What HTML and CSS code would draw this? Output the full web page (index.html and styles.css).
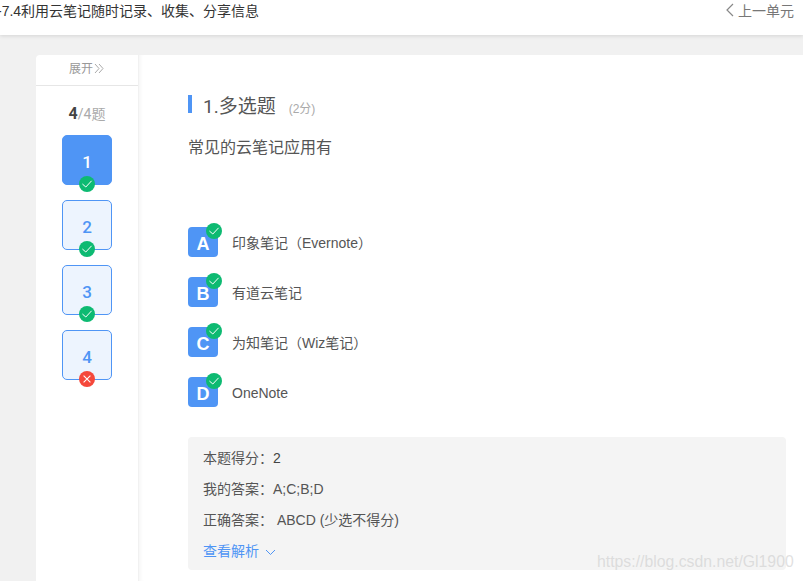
FILE: index.html
```html
<!DOCTYPE html>
<html>
<head>
    <title>7.4利用云笔记随时记录、收集、分享信息</title>
    <link rel="stylesheet" href="styles.css">
</head>
<body>
    <svg class="icon-defs" width="0" height="0">
        <symbol id="ok" viewBox="0 0 16 16">
            <circle cx="8" cy="8" r="8" fill="#0dba72"/>
            <path d="M3.4 8 L6.8 11 L12.6 4.8" fill="none" stroke="#fff" stroke-width="1"/>
        </symbol>
        <symbol id="wrong" viewBox="0 0 16 16">
            <circle cx="8" cy="8" r="8" fill="#f5483b"/>
            <path d="M4.6 4.6 L11.4 11.4 M11.4 4.6 L4.6 11.4" fill="none" stroke="#fff" stroke-width="1.1"/>
        </symbol>
    </svg>

    <header class="topbar">
        <div class="unit-title">-7.4利用云笔记随时记录、收集、分享信息</div>
        <a class="prev-unit">
            <svg width="9" height="14" viewBox="0 0 9 14"><path d="M8 1 L2 7 L8 13" fill="none" stroke="#888" stroke-width="1.2"/></svg>
            上一单元
        </a>
    </header>

    <div class="content">
        <aside class="sidebar">
            <div class="expand">展开<svg width="10" height="11" viewBox="0 0 10 11"><path d="M1 1 L5 5.5 L1 10 M5 1 L9 5.5 L5 10" fill="none" stroke="#aaa" stroke-width="1"/></svg></div>
            <div class="count"><b>4</b>/4题</div>
            <div class="numbers">
                <div class="num current">1<svg class="badge"><use href="#ok"/></svg></div>
                <div class="num">2<svg class="badge"><use href="#ok"/></svg></div>
                <div class="num">3<svg class="badge"><use href="#ok"/></svg></div>
                <div class="num">4<svg class="badge"><use href="#wrong"/></svg></div>
            </div>
        </aside>

        <main class="question">
            <div class="q-head">
                <span class="q-title">1.多选题</span>
                <span class="q-score">(2分)</span>
            </div>
            <p class="q-text">常见的云笔记应用有</p>

            <div class="options">
                <div class="option">
                    <div class="letter">A<svg class="tick"><use href="#ok"/></svg></div>
                    <span>印象笔记（Evernote）</span>
                </div>
                <div class="option">
                    <div class="letter">B<svg class="tick"><use href="#ok"/></svg></div>
                    <span>有道云笔记</span>
                </div>
                <div class="option">
                    <div class="letter">C<svg class="tick"><use href="#ok"/></svg></div>
                    <span>为知笔记（Wiz笔记）</span>
                </div>
                <div class="option">
                    <div class="letter">D<svg class="tick"><use href="#ok"/></svg></div>
                    <span class="latin">OneNote</span>
                </div>
            </div>

            <div class="result">
                <div class="result-row">本题得分：<span class="got">2</span></div>
                <div class="result-row">我的答案：A;C;B;D</div>
                <div class="result-row">正确答案：&nbsp;ABCD (少选不得分)</div>
                <div class="result-row analysis">查看解析
                    <svg width="11" height="7" viewBox="0 0 11 7"><path d="M1 1 L5.5 5.5 L10 1" fill="none" stroke="#4f95f5" stroke-width="1"/></svg>
                </div>
            </div>
        </main>
    </div>

    <div class="watermark">https://blog.csdn.net/Gl1900</div>
</body>
</html>
```

FILE: styles.css
```css
html, body {
    margin: 0;
    height: 581px;
    overflow: hidden;
}
body {
    position: relative;
    background: #f1f1f1;
    font-family: "Liberation Sans", "Noto Sans CJK SC", sans-serif;
    font-size: 14px;
    color: #555;
}
.icon-defs {
    position: absolute;
}
.topbar {
    display: flex;
    justify-content: space-between;
    height: 35px;
    padding: 2px 9px 0 0;
    box-sizing: border-box;
    background: #fff;
    box-shadow: 0 1px 4px rgba(0, 0, 0, 0.12);
}
.unit-title {
    margin-left: -3px;
    line-height: 18px;
    color: #333;
}
.prev-unit {
    display: flex;
    align-items: flex-start;
    gap: 4px;
    line-height: 18px;
    color: #777;
}
.prev-unit svg {
    margin-top: 1px;
}
.content {
    display: flex;
    gap: 1px;
    margin: 20px 0 0 36px;
    height: 526px;
}
.sidebar {
    width: 102px;
    background: #fff;
    border-radius: 4px 0 0 0;
}
.expand {
    height: 30px;
    line-height: 29px;
    padding-right: 1px;
    text-align: center;
    font-size: 12px;
    color: #999;
    border-bottom: 1px solid #e6e6e6;
}
.expand svg {
    margin-left: 1px;
    vertical-align: -1px;
}
.count {
    margin: 19px 0 0;
    line-height: 18px;
    text-align: center;
    font-family: Roboto, "Noto Sans CJK SC", sans-serif;
    color: #aaa;
}
.count b {
    font-size: 16px;
    color: #444;
}
.numbers {
    display: flex;
    flex-direction: column;
    gap: 15px;
    margin: 12px 0 0 26px;
}
.num {
    position: relative;
    width: 50px;
    height: 50px;
    box-sizing: border-box;
    line-height: 52px;
    text-align: center;
    font-family: Roboto, sans-serif;
    font-size: 17px;
    font-weight: 500;
    color: #4f95f5;
    background: #edf4fe;
    border: 1px solid #4f95f5;
    border-radius: 5px;
}
.num.current {
    color: #fff;
    background: #4f95f5;
}
.badge {
    position: absolute;
    left: 16px;
    bottom: -8px;
    width: 16px;
    height: 16px;
}
.question {
    flex: 1;
    padding: 40px 17px 0 49px;
    background: #fff;
    box-shadow: inset 4px 0 4px -3px rgba(0, 0, 0, 0.05);
}
.q-head {
    display: flex;
    align-items: center;
    height: 18px;
    padding-left: 11px;
    border-left: 4px solid #4f95f5;
    box-sizing: border-box;
    width: 200px;
    white-space: nowrap;
}
.q-title {
    font-family: Roboto, "Noto Sans CJK SC", sans-serif;
    font-size: 19px;
    color: #555;
    line-height: 24px;
    margin-top: 5px;
}
.q-score {
    margin: 7px 0 0 13px;
    font-size: 12px;
    color: #aaa;
}
.q-text {
    margin: 24px 0 0;
    line-height: 22px;
    font-size: 16px;
    color: #555;
}
.options {
    display: flex;
    flex-direction: column;
    gap: 20px;
    margin-top: 68px;
}
.option {
    display: flex;
    align-items: center;
    gap: 14px;
    height: 30px;
    font-size: 14px;
    color: #555;
}
.latin {
    margin-top: 1px;
}
.letter {
    position: relative;
    width: 30px;
    height: 30px;
    line-height: 34px;
    text-align: center;
    font-size: 18px;
    font-weight: 700;
    color: #fff;
    background: #4f95f5;
    border-radius: 4px;
}
.tick {
    position: absolute;
    top: -4px;
    right: -4px;
    width: 16px;
    height: 16px;
}
.result {
    margin-top: 30px;
    padding: 6px 15px 0;
    height: 133px;
    box-sizing: border-box;
    background: #f4f4f4;
    border-radius: 4px;
}
.result-row {
    height: 31px;
    line-height: 31px;
    color: #555;
}
.got {
    color: #444;
}
.analysis {
    color: #4f95f5;
}
.analysis svg {
    margin-left: 2px;
}
.watermark {
    position: absolute;
    left: 597px;
    top: 553px;
    font-size: 15.8px;
    color: rgba(200, 200, 200, 0.55);
}
```
